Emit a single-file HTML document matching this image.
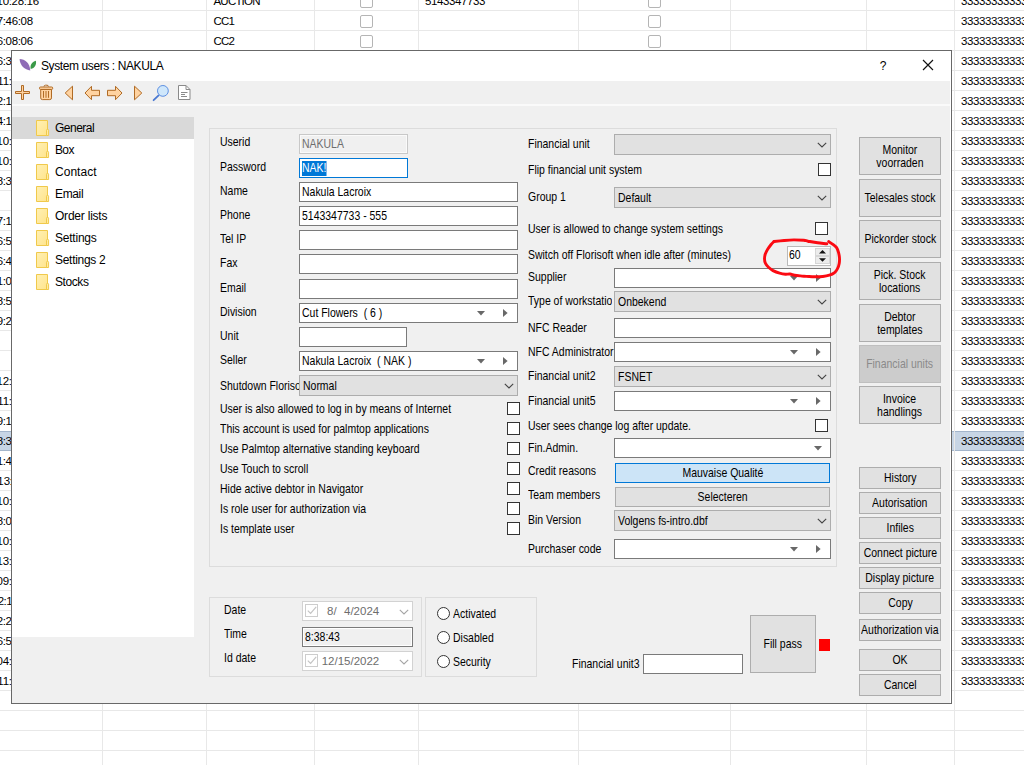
<!DOCTYPE html>
<html lang="en"><head><meta charset="utf-8"><title>System users : NAKULA</title>
<style>
html,body{margin:0;padding:0;}
body{width:1024px;height:765px;overflow:hidden;background:#fff;position:relative;font-family:"Liberation Sans",sans-serif;color:#000;}
div,span,svg{position:absolute;box-sizing:border-box;}
span{white-space:nowrap;}
.g{font-size:11.5px;line-height:14px;color:#000;}
.f{font-size:12.4px;line-height:13px;color:#000;transform:scaleX(0.845);transform-origin:0 50%;}
.tr{font-size:12px;line-height:14px;color:#000;letter-spacing:-0.3px;}
.ti{font-size:12px;line-height:14px;color:#000;letter-spacing:-0.4px;}
.in{background:#fff;border:1px solid #7a7a7a;}
.cb{background:#fff;border:1px solid #333;width:13px;height:13px;}
.gcb{background:#fff;border:1px solid #b5b5b5;border-radius:2px;width:13px;height:13px;}
.combo{background:#e1e1e1;border:1px solid #adadad;}
.btn{background:#e1e1e1;border:1px solid #adadad;font-size:12.4px;line-height:13px;text-align:center;display:flex;align-items:center;justify-content:center;white-space:normal;}
.gb{border:1px solid #dcdcdc;}
.tm i{font-style:normal;margin:0 -0.5px;}
.hl{background:#e8e8e8;}
.vl{background:#e8e8e8;width:1px;}
.btn b{font-weight:normal;display:inline-block;transform:scaleX(0.845);white-space:nowrap;}
</style></head><body>

<div id="grid" style="left:0;top:0;width:1024px;height:765px;overflow:hidden;background:#fff;">
<div style="left:0px;top:431px;width:1024px;height:20px;background:#c7d5e5;border-top:1px solid #a3b5cb;border-bottom:1px solid #a3b5cb;"></div>
<div class="hl" style="left:0;top:10px;width:1024px;height:1px;"></div>
<div class="hl" style="left:0;top:30px;width:1024px;height:1px;"></div>
<div class="hl" style="left:0;top:50px;width:1024px;height:1px;"></div>
<div class="hl" style="left:0;top:70px;width:1024px;height:1px;"></div>
<div class="hl" style="left:0;top:90px;width:1024px;height:1px;"></div>
<div class="hl" style="left:0;top:110px;width:1024px;height:1px;"></div>
<div class="hl" style="left:0;top:130px;width:1024px;height:1px;"></div>
<div class="hl" style="left:0;top:150px;width:1024px;height:1px;"></div>
<div class="hl" style="left:0;top:170px;width:1024px;height:1px;"></div>
<div class="hl" style="left:0;top:190px;width:1024px;height:1px;"></div>
<div class="hl" style="left:0;top:210px;width:1024px;height:1px;"></div>
<div class="hl" style="left:0;top:230px;width:1024px;height:1px;"></div>
<div class="hl" style="left:0;top:250px;width:1024px;height:1px;"></div>
<div class="hl" style="left:0;top:270px;width:1024px;height:1px;"></div>
<div class="hl" style="left:0;top:290px;width:1024px;height:1px;"></div>
<div class="hl" style="left:0;top:310px;width:1024px;height:1px;"></div>
<div class="hl" style="left:0;top:330px;width:1024px;height:1px;"></div>
<div class="hl" style="left:0;top:350px;width:1024px;height:1px;"></div>
<div class="hl" style="left:0;top:370px;width:1024px;height:1px;"></div>
<div class="hl" style="left:0;top:390px;width:1024px;height:1px;"></div>
<div class="hl" style="left:0;top:410px;width:1024px;height:1px;"></div>
<div class="hl" style="left:0;top:470px;width:1024px;height:1px;"></div>
<div class="hl" style="left:0;top:490px;width:1024px;height:1px;"></div>
<div class="hl" style="left:0;top:510px;width:1024px;height:1px;"></div>
<div class="hl" style="left:0;top:530px;width:1024px;height:1px;"></div>
<div class="hl" style="left:0;top:550px;width:1024px;height:1px;"></div>
<div class="hl" style="left:0;top:570px;width:1024px;height:1px;"></div>
<div class="hl" style="left:0;top:590px;width:1024px;height:1px;"></div>
<div class="hl" style="left:0;top:610px;width:1024px;height:1px;"></div>
<div class="hl" style="left:0;top:630px;width:1024px;height:1px;"></div>
<div class="hl" style="left:0;top:650px;width:1024px;height:1px;"></div>
<div class="hl" style="left:0;top:670px;width:1024px;height:1px;"></div>
<div class="hl" style="left:0;top:690px;width:1024px;height:1px;"></div>
<div class="hl" style="left:0;top:710px;width:1024px;height:1px;"></div>
<div class="hl" style="left:0;top:730px;width:1024px;height:1px;"></div>
<div class="hl" style="left:0;top:750px;width:1024px;height:1px;"></div>
<div class="vl" style="left:102px;top:0;height:765px;"></div>
<div class="vl" style="left:206px;top:0;height:765px;"></div>
<div class="vl" style="left:314px;top:0;height:765px;"></div>
<div class="vl" style="left:418px;top:0;height:765px;"></div>
<div class="vl" style="left:578px;top:0;height:765px;"></div>
<div class="vl" style="left:730px;top:0;height:765px;"></div>
<div class="vl" style="left:866px;top:0;height:765px;"></div>
<div class="vl" style="left:954px;top:0;height:765px;"></div>
<span class="g tm" style="right:984.8px;top:-6px;">10<i>:</i>28<i>:</i>16</span>
<span class="g tm" style="right:990.8px;top:14px;">7<i>:</i>46<i>:</i>08</span>
<span class="g tm" style="right:990.8px;top:34px;">6<i>:</i>08<i>:</i>06</span>
<span class="g tm" style="right:990.8px;top:54px;">6<i>:</i>31<i>:</i>02</span>
<span class="g tm" style="right:984.8px;top:74px;">11<i>:</i>12<i>:</i>45</span>
<span class="g tm" style="right:990.8px;top:94px;">2<i>:</i>14<i>:</i>33</span>
<span class="g tm" style="right:990.8px;top:114px;">4<i>:</i>10<i>:</i>27</span>
<span class="g tm" style="right:984.8px;top:134px;">10<i>:</i>05<i>:</i>51</span>
<span class="g tm" style="right:984.8px;top:154px;">10<i>:</i>47<i>:</i>19</span>
<span class="g tm" style="right:990.8px;top:174px;">8<i>:</i>30<i>:</i>12</span>
<span class="g tm" style="right:990.8px;top:214px;">7<i>:</i>12<i>:</i>40</span>
<span class="g tm" style="right:990.8px;top:234px;">6<i>:</i>52<i>:</i>08</span>
<span class="g tm" style="right:990.8px;top:254px;">6<i>:</i>44<i>:</i>31</span>
<span class="g tm" style="right:990.8px;top:274px;">1<i>:</i>03<i>:</i>26</span>
<span class="g tm" style="right:990.8px;top:294px;">8<i>:</i>55<i>:</i>14</span>
<span class="g tm" style="right:990.8px;top:314px;">9<i>:</i>24<i>:</i>09</span>
<span class="g tm" style="right:984.8px;top:374px;">12<i>:</i>20<i>:</i>18</span>
<span class="g tm" style="right:984.8px;top:394px;">11<i>:</i>36<i>:</i>44</span>
<span class="g tm" style="right:990.8px;top:414px;">9<i>:</i>14<i>:</i>02</span>
<span class="g tm" style="right:990.8px;top:434px;">8<i>:</i>38<i>:</i>43</span>
<span class="g tm" style="right:990.8px;top:454px;">1<i>:</i>47<i>:</i>25</span>
<span class="g tm" style="right:984.8px;top:474px;">13<i>:</i>02<i>:</i>11</span>
<span class="g tm" style="right:984.8px;top:494px;">10<i>:</i>19<i>:</i>37</span>
<span class="g tm" style="right:990.8px;top:514px;">8<i>:</i>04<i>:</i>50</span>
<span class="g tm" style="right:984.8px;top:534px;">10<i>:</i>33<i>:</i>28</span>
<span class="g tm" style="right:984.8px;top:554px;">13<i>:</i>41<i>:</i>06</span>
<span class="g tm" style="right:984.8px;top:574px;">09<i>:</i>15<i>:</i>22</span>
<span class="g tm" style="right:990.8px;top:594px;">2<i>:</i>11<i>:</i>39</span>
<span class="g tm" style="right:990.8px;top:614px;">2<i>:</i>25<i>:</i>47</span>
<span class="g tm" style="right:990.8px;top:634px;">6<i>:</i>53<i>:</i>30</span>
<span class="g tm" style="right:984.8px;top:654px;">04<i>:</i>18<i>:</i>55</span>
<span class="g tm" style="right:984.8px;top:674px;">11<i>:</i>29<i>:</i>13</span>
<span class="g" style="left:213.5px;top:-6px;letter-spacing:-0.8px;">AUCTION</span>
<span class="g" style="left:213.5px;top:14px;letter-spacing:-0.8px;">CC1</span>
<span class="g" style="left:213.5px;top:34px;letter-spacing:-0.8px;">CC2</span>
<span class="g" style="left:425px;top:-6px;letter-spacing:-0.4px;">5143347733</span>
<div class="gcb" style="left:360px;top:-5px;"></div>
<div class="gcb" style="left:648px;top:-5px;"></div>
<div class="gcb" style="left:360px;top:15px;"></div>
<div class="gcb" style="left:648px;top:15px;"></div>
<div class="gcb" style="left:360px;top:35px;"></div>
<div class="gcb" style="left:648px;top:35px;"></div>
<span class="g" style="left:961px;top:-6px;letter-spacing:-0.4px;">33333333333333</span>
<span class="g" style="left:961px;top:14px;letter-spacing:-0.4px;">33333333333333</span>
<span class="g" style="left:961px;top:34px;letter-spacing:-0.4px;">33333333333333</span>
<span class="g" style="left:961px;top:54px;letter-spacing:-0.4px;">33333333333333</span>
<span class="g" style="left:961px;top:74px;letter-spacing:-0.4px;">33333333333333</span>
<span class="g" style="left:961px;top:94px;letter-spacing:-0.4px;">33333333333333</span>
<span class="g" style="left:961px;top:114px;letter-spacing:-0.4px;">33333333333333</span>
<span class="g" style="left:961px;top:134px;letter-spacing:-0.4px;">33333333333333</span>
<span class="g" style="left:961px;top:154px;letter-spacing:-0.4px;">33333333333333</span>
<span class="g" style="left:961px;top:174px;letter-spacing:-0.4px;">33333333333333</span>
<span class="g" style="left:961px;top:194px;letter-spacing:-0.4px;">33333333333333</span>
<span class="g" style="left:961px;top:214px;letter-spacing:-0.4px;">33333333333333</span>
<span class="g" style="left:961px;top:234px;letter-spacing:-0.4px;">33333333333333</span>
<span class="g" style="left:961px;top:254px;letter-spacing:-0.4px;">33333333333333</span>
<span class="g" style="left:961px;top:274px;letter-spacing:-0.4px;">33333333333333</span>
<span class="g" style="left:961px;top:294px;letter-spacing:-0.4px;">33333333333333</span>
<span class="g" style="left:961px;top:314px;letter-spacing:-0.4px;">33333333333333</span>
<span class="g" style="left:961px;top:334px;letter-spacing:-0.4px;">33333333333333</span>
<span class="g" style="left:961px;top:354px;letter-spacing:-0.4px;">33333333333333</span>
<span class="g" style="left:961px;top:374px;letter-spacing:-0.4px;">33333333333333</span>
<span class="g" style="left:961px;top:394px;letter-spacing:-0.4px;">33333333333333</span>
<span class="g" style="left:961px;top:414px;letter-spacing:-0.4px;">33333333333333</span>
<span class="g" style="left:961px;top:434px;letter-spacing:-0.4px;">33333333333333</span>
<span class="g" style="left:961px;top:454px;letter-spacing:-0.4px;">33333333333333</span>
<span class="g" style="left:961px;top:474px;letter-spacing:-0.4px;">33333333333333</span>
<span class="g" style="left:961px;top:494px;letter-spacing:-0.4px;">33333333333333</span>
<span class="g" style="left:961px;top:514px;letter-spacing:-0.4px;">33333333333333</span>
<span class="g" style="left:961px;top:534px;letter-spacing:-0.4px;">33333333333333</span>
<span class="g" style="left:961px;top:554px;letter-spacing:-0.4px;">33333333333333</span>
<span class="g" style="left:961px;top:574px;letter-spacing:-0.4px;">33333333333333</span>
<span class="g" style="left:961px;top:594px;letter-spacing:-0.4px;">33333333333333</span>
<span class="g" style="left:961px;top:614px;letter-spacing:-0.4px;">33333333333333</span>
<span class="g" style="left:961px;top:634px;letter-spacing:-0.4px;">33333333333333</span>
<span class="g" style="left:961px;top:654px;letter-spacing:-0.4px;">33333333333333</span>
<span class="g" style="left:961px;top:674px;letter-spacing:-0.4px;">33333333333333</span>
</div>
<div id="dlg" style="left:11px;top:50px;width:941px;height:654px;background:#f0f0f0;border:1px solid #686868;"></div>
<div style="left:12px;top:51px;width:939px;height:30px;background:#fff;"></div>
<div style="left:950px;top:51px;width:1px;height:652px;background:#fff;"></div>
<div style="left:12px;top:104px;width:938px;height:2px;background:#fafafa;"></div>
<svg style="left:18px;top:57px;" width="20" height="16" viewBox="0 0 20 16">
<path d="M1.6 1.9 C7.0 1.9 11.8 6.0 12.3 13.4 C6.8 12.8 1.7 8.2 1.6 1.9 Z" fill="#8f6cb6"/>
<path d="M17.9 3.7 C18.7 7.6 16.8 10.9 12.7 12.1 C11.9 8.2 13.6 5.0 17.9 3.7 Z" fill="#3a9a48"/>
</svg>
<span class="ti" style="left:41px;top:59px;">System users : NAKULA</span>
<span class="ti" style="left:879.7px;top:59px;font-size:12px;">?</span>
<svg style="left:922px;top:59px;" width="12" height="12" viewBox="0 0 12 12"><path d="M1.0 1.0 L11.0 11.0 M11.0 1.0 L1.0 11.0" stroke="#111" stroke-width="1.15" fill="none"/></svg>
<svg style="left:14px;top:84px;" width="180" height="18" viewBox="0 0 180 18">
<!-- plus -->
<path d="M7.5 1.5 h2 v6 h6 v2 h-6 v6 h-2 v-6 h-6 v-2 h6 z" fill="#ffd3a1" stroke="#b06b25" stroke-width="1"/>
<!-- trash -->
<path d="M30 2.6 q0 -1.4 1.4 -1.4 h1.6 q1.4 0 1.4 1.4" fill="none" stroke="#b06b25" stroke-width="1"/>
<rect x="25.5" y="3.0" width="13.2" height="2.4" rx="1" fill="#ffd3a1" stroke="#b06b25" stroke-width="1"/>
<path d="M26.7 5.5 h10.8 v8.4 q0 1.7 -1.7 1.7 h-7.4 q-1.7 0 -1.7 -1.7 z" fill="#ffd3a1" stroke="#b06b25" stroke-width="1"/>
<path d="M29.5 7 v6.8 M32 7 v6.8 M34.5 7 v6.8" stroke="#b06b25" stroke-width="1" fill="none"/>
<!-- left triangle -->
<path d="M58.5 2.2 V15.8 L51.2 9 Z" fill="#ffd3a1" stroke="#b06b25" stroke-width="1" stroke-linejoin="round"/>
<!-- left arrow -->
<path d="M71 9 L77.5 2.3 V6.3 H85.5 V11.7 H77.5 V15.7 Z" fill="#ffd3a1" stroke="#b06b25" stroke-width="1" stroke-linejoin="round"/>
<!-- right arrow -->
<path d="M108 9 L101.5 2.3 V6.3 H93.5 V11.7 H101.5 V15.7 Z" fill="#ffd3a1" stroke="#b06b25" stroke-width="1" stroke-linejoin="round"/>
<!-- right triangle -->
<path d="M120.5 2.2 V15.8 L127.8 9 Z" fill="#ffd3a1" stroke="#b06b25" stroke-width="1" stroke-linejoin="round"/>
<!-- magnifier -->
<path d="M144.6 11.4 L139.6 16.2" stroke="#4b79d2" stroke-width="1.8" stroke-linecap="round" fill="none"/>
<circle cx="148.9" cy="6.9" r="5.4" fill="#cfe7fb" stroke="#5c8fe2" stroke-width="1"/>
<!-- document -->
<path d="M164.5 1.5 H172 L176 5.5 V15.5 H164.5 Z" fill="#fff" stroke="#8a8a8a" stroke-width="1"/>
<path d="M172 1.5 V5.5 H176" fill="none" stroke="#8a8a8a" stroke-width="1"/>
<path d="M167 8.5 h6.5 M167 10.5 h4 M167 12.5 h6" stroke="#8a8a8a" stroke-width="1" fill="none"/>
</svg>
<svg style="left:0;top:0;" width="0" height="0"><defs><linearGradient id="fg" x1="0" y1="0" x2="1" y2="1"><stop offset="0" stop-color="#fff0b4"/><stop offset="1" stop-color="#ffe48c"/></linearGradient></defs></svg>
<div style="left:12px;top:117px;width:182px;height:520px;background:#fff;"></div>
<div style="left:12px;top:117px;width:182px;height:22px;background:#d9d9d9;"></div>
<svg style="left:35px;top:120px;" width="15" height="16" viewBox="0 0 15 16"><path d="M1.5 0.5 H12.5 V15.5 H1.5 Z" fill="url(#fg)" stroke="#f0c94b" stroke-width="1"/><path d="M11.5 15.5 V10.3 q0 -0.9 0.9 -0.9 h0.3 q0.9 0 0.9 0.9 V15.5 Z" fill="#ffeba3" stroke="#f0c94b" stroke-width="1"/></svg>
<span class="tr" style="left:55px;top:121px;letter-spacing:-0.5px;">General</span>
<svg style="left:35px;top:142px;" width="15" height="16" viewBox="0 0 15 16"><path d="M1.5 0.5 H12.5 V15.5 H1.5 Z" fill="url(#fg)" stroke="#f0c94b" stroke-width="1"/><path d="M11.5 15.5 V10.3 q0 -0.9 0.9 -0.9 h0.3 q0.9 0 0.9 0.9 V15.5 Z" fill="#ffeba3" stroke="#f0c94b" stroke-width="1"/></svg>
<span class="tr" style="left:55px;top:143px;letter-spacing:-0.63px;">Box</span>
<svg style="left:35px;top:164px;" width="15" height="16" viewBox="0 0 15 16"><path d="M1.5 0.5 H12.5 V15.5 H1.5 Z" fill="url(#fg)" stroke="#f0c94b" stroke-width="1"/><path d="M11.5 15.5 V10.3 q0 -0.9 0.9 -0.9 h0.3 q0.9 0 0.9 0.9 V15.5 Z" fill="#ffeba3" stroke="#f0c94b" stroke-width="1"/></svg>
<span class="tr" style="left:55px;top:165px;letter-spacing:0.03px;">Contact</span>
<svg style="left:35px;top:186px;" width="15" height="16" viewBox="0 0 15 16"><path d="M1.5 0.5 H12.5 V15.5 H1.5 Z" fill="url(#fg)" stroke="#f0c94b" stroke-width="1"/><path d="M11.5 15.5 V10.3 q0 -0.9 0.9 -0.9 h0.3 q0.9 0 0.9 0.9 V15.5 Z" fill="#ffeba3" stroke="#f0c94b" stroke-width="1"/></svg>
<span class="tr" style="left:55px;top:187px;letter-spacing:-0.36px;">Email</span>
<svg style="left:35px;top:208px;" width="15" height="16" viewBox="0 0 15 16"><path d="M1.5 0.5 H12.5 V15.5 H1.5 Z" fill="url(#fg)" stroke="#f0c94b" stroke-width="1"/><path d="M11.5 15.5 V10.3 q0 -0.9 0.9 -0.9 h0.3 q0.9 0 0.9 0.9 V15.5 Z" fill="#ffeba3" stroke="#f0c94b" stroke-width="1"/></svg>
<span class="tr" style="left:55px;top:209px;letter-spacing:-0.22px;">Order lists</span>
<svg style="left:35px;top:230px;" width="15" height="16" viewBox="0 0 15 16"><path d="M1.5 0.5 H12.5 V15.5 H1.5 Z" fill="url(#fg)" stroke="#f0c94b" stroke-width="1"/><path d="M11.5 15.5 V10.3 q0 -0.9 0.9 -0.9 h0.3 q0.9 0 0.9 0.9 V15.5 Z" fill="#ffeba3" stroke="#f0c94b" stroke-width="1"/></svg>
<span class="tr" style="left:55px;top:231px;letter-spacing:-0.22px;">Settings</span>
<svg style="left:35px;top:252px;" width="15" height="16" viewBox="0 0 15 16"><path d="M1.5 0.5 H12.5 V15.5 H1.5 Z" fill="url(#fg)" stroke="#f0c94b" stroke-width="1"/><path d="M11.5 15.5 V10.3 q0 -0.9 0.9 -0.9 h0.3 q0.9 0 0.9 0.9 V15.5 Z" fill="#ffeba3" stroke="#f0c94b" stroke-width="1"/></svg>
<span class="tr" style="left:55px;top:253px;letter-spacing:-0.29px;">Settings 2</span>
<svg style="left:35px;top:274px;" width="15" height="16" viewBox="0 0 15 16"><path d="M1.5 0.5 H12.5 V15.5 H1.5 Z" fill="url(#fg)" stroke="#f0c94b" stroke-width="1"/><path d="M11.5 15.5 V10.3 q0 -0.9 0.9 -0.9 h0.3 q0.9 0 0.9 0.9 V15.5 Z" fill="#ffeba3" stroke="#f0c94b" stroke-width="1"/></svg>
<span class="tr" style="left:55px;top:275px;letter-spacing:-0.42px;">Stocks</span>
<div style="left:209px;top:128px;width:628px;height:439px;border:1px solid #dcdcdc;"></div>
<div style="left:209px;top:597px;width:213px;height:80px;border:1px solid #dcdcdc;"></div>
<div style="left:425px;top:597px;width:112px;height:80px;border:1px solid #dcdcdc;"></div>
<span class="f" style="left:220px;top:136px;">Userid</span>
<div class="in" style="left:299px;top:134px;width:109px;height:20px;background:#f0f0f0;border-color:#c8c8c8;box-shadow:inset 0 0 0 1px #fafafa;"><span class="f" style="left:2px;top:3px;color:#6d6d6d;">NAKULA</span></div>
<span class="f" style="left:220px;top:161px;">Password</span>
<div class="in" style="left:299px;top:158px;width:109px;height:20px;border-color:#0078d7;"><span class="f" style="left:2px;top:2px;height:15px;line-height:15px;background:#0078d7;color:#fff;padding:0 0px;">NAK!</span></div>
<span class="f" style="left:220px;top:185px;">Name</span>
<div class="in" style="left:299px;top:182px;width:219px;height:20px;"><span class="f" style="left:2px;top:3px;">Nakula Lacroix</span></div>
<span class="f" style="left:220px;top:209px;">Phone</span>
<div class="in" style="left:299px;top:206px;width:219px;height:20px;"><span class="f" style="left:2px;top:3px;">5143347733 - 555</span></div>
<span class="f" style="left:220px;top:233px;">Tel IP</span>
<div class="in" style="left:299px;top:230px;width:219px;height:20px;"></div>
<span class="f" style="left:220px;top:257px;">Fax</span>
<div class="in" style="left:299px;top:254px;width:219px;height:20px;"></div>
<span class="f" style="left:220px;top:282px;">Email</span>
<div class="in" style="left:299px;top:279px;width:219px;height:20px;"></div>
<span class="f" style="left:220px;top:306px;">Division</span>
<div class="in" style="left:299px;top:303px;width:219px;height:20px;"><span class="f" style="left:2px;top:3px;">Cut Flowers&nbsp; ( 6 )</span><svg style="left:177px;top:7.2px;" width="8" height="5" viewBox="0 0 8 5"><path d="M0 0 H8 L4 4.5 Z" fill="#686868"/></svg><svg style="left:203px;top:5.2px;" width="5" height="8" viewBox="0 0 5 8"><path d="M0 0 V8 L4.6 4 Z" fill="#686868"/></svg></div>
<span class="f" style="left:220px;top:330px;">Unit</span>
<div class="in" style="left:299px;top:327px;width:108px;height:20px;"></div>
<span class="f" style="left:220px;top:354px;">Seller</span>
<div class="in" style="left:299px;top:351px;width:219px;height:20px;"><span class="f" style="left:2px;top:3px;">Nakula Lacroix&nbsp; ( NAK )</span><svg style="left:177px;top:7.2px;" width="8" height="5" viewBox="0 0 8 5"><path d="M0 0 H8 L4 4.5 Z" fill="#686868"/></svg><svg style="left:203px;top:5.2px;" width="5" height="8" viewBox="0 0 5 8"><path d="M0 0 V8 L4.6 4 Z" fill="#686868"/></svg></div>
<div style="left:220px;top:380px;width:79px;height:14px;overflow:hidden;"><span class="f" style="left:0;top:0;">Shutdown Florisoft</span></div>
<div class="combo" style="left:299px;top:375px;width:219px;height:21px;"><span class="f" style="left:3px;top:4px;">Normal</span><svg style="left:204px;top:7px;" width="10" height="6" viewBox="0 0 10 6"><path d="M0.8 0.8 L5 5 L9.2 0.8" fill="none" stroke="#444" stroke-width="1.1"/></svg></div>
<span class="f" style="left:220px;top:403px;">User is also allowed to log in by means of Internet</span>
<div class="cb" style="left:507px;top:402px;"></div>
<span class="f" style="left:220px;top:423px;">This account is used for palmtop applications</span>
<div class="cb" style="left:507px;top:422px;"></div>
<span class="f" style="left:220px;top:443px;">Use Palmtop alternative standing keyboard</span>
<div class="cb" style="left:507px;top:442px;"></div>
<span class="f" style="left:220px;top:463px;">Use Touch to scroll</span>
<div class="cb" style="left:507px;top:462px;"></div>
<span class="f" style="left:220px;top:483px;">Hide active debtor in Navigator</span>
<div class="cb" style="left:507px;top:482px;"></div>
<span class="f" style="left:220px;top:503px;">Is role user for authorization via</span>
<div class="cb" style="left:507px;top:502px;"></div>
<span class="f" style="left:220px;top:523px;">Is template user</span>
<div class="cb" style="left:507px;top:522px;"></div>
<span class="f" style="left:528px;top:138px;">Financial unit</span>
<div class="combo" style="left:614px;top:134px;width:217px;height:21px;"><svg style="left:202px;top:7px;" width="10" height="6" viewBox="0 0 10 6"><path d="M0.8 0.8 L5 5 L9.2 0.8" fill="none" stroke="#444" stroke-width="1.1"/></svg></div>
<span class="f" style="left:528px;top:164px;">Flip financial unit system</span>
<div class="cb" style="left:818px;top:163px;"></div>
<span class="f" style="left:528px;top:191px;">Group 1</span>
<div class="combo" style="left:614px;top:187px;width:217px;height:21px;"><span class="f" style="left:3px;top:4px;">Default</span><svg style="left:202px;top:7px;" width="10" height="6" viewBox="0 0 10 6"><path d="M0.8 0.8 L5 5 L9.2 0.8" fill="none" stroke="#444" stroke-width="1.1"/></svg></div>
<span class="f" style="left:528px;top:223px;">User is allowed to change system settings</span>
<div class="cb" style="left:815px;top:222px;"></div>
<span class="f" style="left:528px;top:249px;">Switch off Florisoft when idle after (minutes)</span>
<div class="in" style="left:787px;top:246px;width:44px;height:20px;border-color:#b9b9b9;"><span class="f" style="left:1px;top:2px;">60</span><div style="left:27px;top:1px;width:15px;height:8px;background:#ececec;border:1px solid #d6d6d6;"></div><div style="left:27px;top:9px;width:15px;height:8px;background:#ececec;border:1px solid #d6d6d6;"></div><svg style="left:31px;top:3px;" width="7" height="4" viewBox="0 0 7 4"><path d="M0 3.6 H7 L3.5 0 Z" fill="#111"/></svg><svg style="left:31px;top:11px;" width="7" height="4" viewBox="0 0 7 4"><path d="M0 0.2 H7 L3.5 3.8 Z" fill="#111"/></svg></div>
<span class="f" style="left:528px;top:271px;">Supplier</span>
<div class="in" style="left:614px;top:268px;width:217px;height:20px;"><svg style="left:175px;top:7.2px;" width="8" height="5" viewBox="0 0 8 5"><path d="M0 0 H8 L4 4.5 Z" fill="#686868"/></svg><svg style="left:201px;top:5.2px;" width="5" height="8" viewBox="0 0 5 8"><path d="M0 0 V8 L4.6 4 Z" fill="#686868"/></svg></div>
<div style="left:528px;top:295px;width:84px;height:14px;overflow:hidden;"><span class="f" style="left:0;top:0;">Type of workstation</span></div>
<div class="combo" style="left:614px;top:291px;width:217px;height:21px;"><span class="f" style="left:3px;top:4px;">Onbekend</span><svg style="left:202px;top:7px;" width="10" height="6" viewBox="0 0 10 6"><path d="M0.8 0.8 L5 5 L9.2 0.8" fill="none" stroke="#444" stroke-width="1.1"/></svg></div>
<span class="f" style="left:528px;top:322px;">NFC Reader</span>
<div class="in" style="left:614px;top:318px;width:217px;height:20px;"></div>
<span class="f" style="left:528px;top:346px;">NFC Administrator</span>
<div class="in" style="left:614px;top:342px;width:217px;height:20px;"><svg style="left:175px;top:7.2px;" width="8" height="5" viewBox="0 0 8 5"><path d="M0 0 H8 L4 4.5 Z" fill="#686868"/></svg><svg style="left:201px;top:5.2px;" width="5" height="8" viewBox="0 0 5 8"><path d="M0 0 V8 L4.6 4 Z" fill="#686868"/></svg></div>
<span class="f" style="left:528px;top:370px;">Financial unit2</span>
<div class="combo" style="left:614px;top:366px;width:217px;height:21px;"><span class="f" style="left:3px;top:4px;">FSNET</span><svg style="left:202px;top:7px;" width="10" height="6" viewBox="0 0 10 6"><path d="M0.8 0.8 L5 5 L9.2 0.8" fill="none" stroke="#444" stroke-width="1.1"/></svg></div>
<span class="f" style="left:528px;top:395px;">Financial unit5</span>
<div class="in" style="left:614px;top:391px;width:217px;height:20px;"><svg style="left:175px;top:7.2px;" width="8" height="5" viewBox="0 0 8 5"><path d="M0 0 H8 L4 4.5 Z" fill="#686868"/></svg><svg style="left:201px;top:5.2px;" width="5" height="8" viewBox="0 0 5 8"><path d="M0 0 V8 L4.6 4 Z" fill="#686868"/></svg></div>
<span class="f" style="left:528px;top:420px;">User sees change log after update.</span>
<div class="cb" style="left:815px;top:419px;"></div>
<span class="f" style="left:528px;top:442px;">Fin.Admin.</span>
<div class="in" style="left:614px;top:438px;width:217px;height:20px;"><svg style="left:199px;top:7.2px;" width="8" height="5" viewBox="0 0 8 5"><path d="M0 0 H8 L4 4.5 Z" fill="#686868"/></svg></div>
<span class="f" style="left:528px;top:465px;">Credit reasons</span>
<div class="btn" style="left:615px;top:463px;width:215px;height:20px;background:#cce4f7;border-color:#0078d7;"><b>Mauvaise Qualité</b></div>
<span class="f" style="left:528px;top:489px;">Team members</span>
<div class="btn" style="left:615px;top:487px;width:215px;height:20px;"><b>Selecteren</b></div>
<span class="f" style="left:528px;top:514px;">Bin Version</span>
<div class="combo" style="left:614px;top:510px;width:217px;height:21px;"><span class="f" style="left:3px;top:4px;">Volgens fs-intro.dbf</span><svg style="left:202px;top:7px;" width="10" height="6" viewBox="0 0 10 6"><path d="M0.8 0.8 L5 5 L9.2 0.8" fill="none" stroke="#444" stroke-width="1.1"/></svg></div>
<span class="f" style="left:528px;top:543px;">Purchaser code</span>
<div class="in" style="left:614px;top:539px;width:217px;height:20px;"><svg style="left:175px;top:7.2px;" width="8" height="5" viewBox="0 0 8 5"><path d="M0 0 H8 L4 4.5 Z" fill="#686868"/></svg><svg style="left:201px;top:5.2px;" width="5" height="8" viewBox="0 0 5 8"><path d="M0 0 V8 L4.6 4 Z" fill="#686868"/></svg></div>
<svg style="left:750px;top:230px;" width="100" height="60" viewBox="750 230 100 60"><path d="M828.7 241.6 C829.5 242.1 832.0 243.6 833.3 244.6 C834.6 245.6 835.7 246.3 836.6 247.6 C837.5 248.9 838.0 250.5 838.5 252.3 C839.0 254.1 839.4 256.4 839.5 258.2 C839.6 260.0 839.5 261.7 839.2 263.4 C838.9 265.1 838.3 267.1 837.5 268.6 C836.7 270.1 836.0 271.5 834.6 272.6 C833.2 273.7 831.4 274.6 829.4 275.2 C827.4 275.8 825.3 276.2 822.8 276.5 C820.3 276.8 817.0 276.8 814.3 276.8 C811.6 276.8 808.8 276.5 806.5 276.4 C804.2 276.2 802.5 276.1 800.5 275.9 C798.5 275.7 796.4 275.5 794.6 275.2 C792.9 274.9 791.5 274.2 790.0 274.0 C788.5 273.8 787.2 274.3 785.5 274.2 C783.8 274.1 781.7 273.8 779.6 273.2 C777.5 272.6 774.9 271.6 773.0 270.6 C771.1 269.6 769.8 268.5 768.5 267.3 C767.2 266.1 766.2 264.8 765.5 263.4 C764.8 262.0 764.5 260.3 764.5 258.8 C764.5 257.3 764.7 255.9 765.2 254.3 C765.8 252.7 766.8 250.6 767.8 249.0 C768.8 247.4 770.1 245.8 771.1 244.5 C772.1 243.2 773.5 242.0 774.0 241.5" fill="none" stroke="#fb0a12" stroke-width="2.9" stroke-linecap="round" stroke-linejoin="round"/><path d="M774.0 241.5 C775.7 241.3 780.8 240.8 784.1 240.5 C787.4 240.2 790.6 239.9 793.9 239.9 C797.2 239.9 801.4 240.1 803.8 240.3 C806.1 240.5 805.7 240.8 808.0 241.2 C810.3 241.6 814.5 242.4 817.6 242.8 C820.7 243.2 825.3 243.6 826.8 243.8" fill="none" stroke="#fb0a12" stroke-width="2.9" stroke-linecap="round" stroke-linejoin="round"/></svg>
<span class="f" style="left:224px;top:604px;">Date</span>
<span class="f" style="left:224px;top:628px;">Time</span>
<span class="f" style="left:224px;top:652px;">Id date</span>
<div class="in" style="left:302px;top:601px;width:111px;height:20px;background:#fff;border-color:#d2d2d2;"><div style="left:2px;top:2px;width:13px;height:13px;border:1px solid #cdcdcd;background:#fff;"></div><svg style="left:4px;top:4px;" width="10" height="9" viewBox="0 0 10 9"><path d="M0.8 4.6 L3.6 7.4 L9.2 0.8" fill="none" stroke="#c4c4c4" stroke-width="1.2"/></svg><span class="f" style="left:24px;top:3px;color:#6d6d6d;font-size:11.5px;transform:none;">8/</span><span class="f" style="left:41px;top:3px;color:#6d6d6d;font-size:11.5px;transform:none;">4/2024</span><svg style="left:96px;top:7px;" width="10" height="6" viewBox="0 0 10 6"><path d="M0.8 0.8 L5 5 L9.2 0.8" fill="none" stroke="#a5a5a5" stroke-width="1.1"/></svg></div>
<div class="in" style="left:302px;top:627px;width:111px;height:20px;background:#f0f0f0;border-color:#7a7a7a;box-shadow:inset 0 0 0 1px #fff;"><span class="f" style="left:2px;top:3px;">8:38:43</span></div>
<div class="in" style="left:302px;top:651px;width:111px;height:20px;background:#fff;border-color:#d2d2d2;"><div style="left:2px;top:2px;width:13px;height:13px;border:1px solid #cdcdcd;background:#fff;"></div><svg style="left:4px;top:4px;" width="10" height="9" viewBox="0 0 10 9"><path d="M0.8 4.6 L3.6 7.4 L9.2 0.8" fill="none" stroke="#c4c4c4" stroke-width="1.2"/></svg><span class="f" style="left:18.69999999999999px;top:3px;color:#6d6d6d;font-size:11.5px;transform:none;">12/15/2022</span><svg style="left:96px;top:7px;" width="10" height="6" viewBox="0 0 10 6"><path d="M0.8 0.8 L5 5 L9.2 0.8" fill="none" stroke="#a5a5a5" stroke-width="1.1"/></svg></div>
<div style="left:437px;top:607.0px;width:13px;height:13px;border:1px solid #333;border-radius:50%;background:#fff;"></div>
<span class="f" style="left:453px;top:607.5px;">Activated</span>
<div style="left:437px;top:631.0px;width:13px;height:13px;border:1px solid #333;border-radius:50%;background:#fff;"></div>
<span class="f" style="left:453px;top:631.5px;">Disabled</span>
<div style="left:437px;top:655.0px;width:13px;height:13px;border:1px solid #333;border-radius:50%;background:#fff;"></div>
<span class="f" style="left:453px;top:655.5px;">Security</span>
<span class="f" style="left:572px;top:658px;">Financial unit3</span>
<div class="in" style="left:643px;top:654px;width:100px;height:20px;"></div>
<div class="btn" style="left:750px;top:615px;width:66px;height:58px;"><b>Fill pass</b></div>
<div style="left:819px;top:639px;width:11px;height:12px;background:#ff0000;"></div>
<div class="btn" style="left:859px;top:137px;width:82px;height:38px;white-space:nowrap;padding-top:2px;"><b>Monitor<br>voorraden</b></div>
<div class="btn" style="left:859px;top:179px;width:82px;height:38px;white-space:nowrap;"><b>Telesales stock</b></div>
<div class="btn" style="left:859px;top:220px;width:82px;height:38px;white-space:nowrap;"><b>Pickorder stock</b></div>
<div class="btn" style="left:859px;top:262px;width:82px;height:38px;white-space:nowrap;padding-top:2px;"><b>Pick. Stock<br>locations</b></div>
<div class="btn" style="left:859px;top:304px;width:82px;height:38px;white-space:nowrap;padding-top:2px;"><b>Debtor<br>templates</b></div>
<div class="btn" style="left:859px;top:345px;width:82px;height:38px;white-space:nowrap;background:#cccccc;border-color:#bfbfbf;color:#8a8a8a;"><b>Financial units</b></div>
<div class="btn" style="left:859px;top:386px;width:82px;height:38px;white-space:nowrap;padding-top:2px;"><b>Invoice<br>handlings</b></div>
<div class="btn" style="left:859px;top:467px;width:82px;height:22px;"><b>History</b></div>
<div class="btn" style="left:859px;top:492px;width:82px;height:22px;"><b>Autorisation</b></div>
<div class="btn" style="left:859px;top:517px;width:82px;height:22px;"><b>Infiles</b></div>
<div class="btn" style="left:859px;top:542px;width:82px;height:22px;"><b>Connect picture</b></div>
<div class="btn" style="left:859px;top:567px;width:82px;height:22px;"><b>Display picture</b></div>
<div class="btn" style="left:859px;top:592px;width:82px;height:22px;"><b>Copy</b></div>
<div class="btn" style="left:859px;top:619px;width:82px;height:22px;"><b>Authorization via</b></div>
<div class="btn" style="left:859px;top:649px;width:82px;height:22px;"><b>OK</b></div>
<div class="btn" style="left:859px;top:674px;width:82px;height:22px;"><b>Cancel</b></div>
</body></html>
